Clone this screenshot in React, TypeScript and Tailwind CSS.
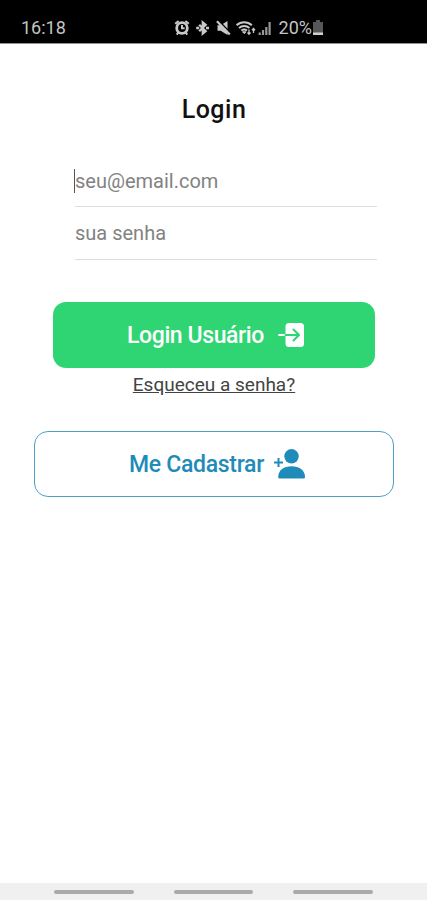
import React, { useState } from 'react'

const StatusIcons = () => (
  <svg width="101" height="18" viewBox="0 0 101 18" fill="none" stroke="#c9c9c9" className="shrink-0">
    {/* alarm */}
    <circle cx="8" cy="9" r="5.3" strokeWidth="2.8" />
    <path d="M8 6v3.3h2.6M1.2 4.8 4.6 2M11.4 2l3.4 2.8M4.4 13.2l-1.6 2.4M11.6 13.2l1.6 2.4" strokeWidth="2" />
    {/* bluetooth */}
    <path d="m25.2 5.8 6.4 6.4-2.8 2.3v-11l2.8 2.3-6.4 6.4" strokeWidth="2.3" />
    <path d="M22.2 9h3M32 9h3" strokeWidth="2.6" />
    {/* sound off */}
    <path d="M43.5 6.2h3.2L53.5 2v14l-6.8-4.200h-3.200z" fill="#c9c9c9" stroke="none" />
    <path d="m44.5 1.5 12.5 13" stroke="#000" strokeWidth="1.8" />
    <path d="m43 2.2 12.8 13.4" strokeWidth="2.2" />
    {/* wifi */}
    <path d="M62.6 6.2c4.4-4 10.8-4 15.2 0M65 9c3-2.7 7.4-2.7 10.4 0M67.4 11.6c1.7-1.4 3.9-1.4 5.6 0" strokeWidth="2" />
    <path d="m68.6 12.8 1.7 1.9 1.6-1.9z" fill="#c9c9c9" strokeWidth="1" />
    <path d="M75 10.5V15M73.500 13.500l1.500 1.700 1.500-1.700M79.500 14V9.500M78 11.200l1.500-1.700 1.500 1.700" strokeWidth="1.3" />
    {/* signal */}
    <path d="M85.7 13.5V16M89 11v5M92.3 8v8M95.6 3v13" strokeWidth="2.2" opacity=".75" />
  </svg>
)

const EnterIcon = () => (
  <svg width="27" height="24" viewBox="0 0 27 24" fill="none" className="shrink-0">
    <rect x="7.5" width="18.5" height="24" rx="3.5" fill="#fff" />
    <path d="M1 12h6.5" stroke="#fff" strokeWidth="1.8" strokeLinecap="round" />
    <path
      d="M7.500 12h13M15.500 6.500 21 12l-5.500 5.500"
      stroke="#2fd573"
      strokeWidth="2"
      strokeLinecap="round"
      strokeLinejoin="round"
    />
  </svg>
)

const PersonAddIcon = () => (
  <svg width="32" height="30" viewBox="0 0 32 30" fill="currentColor" className="shrink-0">
    <circle cx="17.5" cy="7.3" r="7.2" />
    <path d="M4.200 28C4.200 21 10 17.200 17.500 17.200S31 21 31 28c0 1-.400 1.400-1.200 1.400H5.400c-.800 0-1.200-.400-1.200-1.400z" />
    <path d="M4.5 9v9M0 13.500h9" stroke="currentColor" strokeWidth="2" />
  </svg>
)

const StatusBar = () => (
  <header className="flex h-11 items-center border-b border-[#929292] bg-black pt-[13px] pr-[103px] pb-0 pl-[21px] text-[#c4c4c4]">
    <span className="text-[18px] leading-none">16:18</span>
    <div className="ml-auto flex items-center">
      <StatusIcons />
      <span className="ml-[4px] text-[18px] leading-none">20%</span>
      <svg width="12" height="16" viewBox="0 0 12 16">
        <path d="M4 0h4v2h3v13H1V2h3z" fill="#565656" />
        <path d="M1 12.5h10V15H1z" fill="#d0d0d0" />
      </svg>
    </div>
  </header>
)

const inputClass =
  'block w-full border-b border-[#dedede] bg-transparent text-[20px] text-neutral-800 caret-transparent outline-none placeholder-[#828282]'

const App = () => {
  const [email, setEmail] = useState('')
  const [password, setPassword] = useState('')

  const handleSubmit = (e: React.FormEvent) => {
    e.preventDefault()
  }

  return (
    <div className="flex h-[900px] w-[427px] flex-col bg-white font-['Roboto',sans-serif]">
      <StatusBar />

      <main className="flex flex-1 flex-col items-center">
        <h1 className="mt-[51px] ml-px text-[25px] leading-[30px] font-medium tracking-[0.5px] text-[#111]">Login</h1>

        <form onSubmit={handleSubmit} className="flex w-full flex-col items-center">
          <div className="mt-[30px] ml-[25px] w-[302px]">
            <div className="relative">
              <input
                type="email"
                value={email}
                onChange={(e) => setEmail(e.target.value)}
                placeholder="seu@email.com"
                className={`${inputClass} h-[52px]`}
              />
              {!email && <span className="absolute top-[14px] left-[-1px] h-6 w-px bg-[#555]" />}
            </div>
            <input
              type="password"
              value={password}
              onChange={(e) => setPassword(e.target.value)}
              placeholder="sua senha"
              className={`${inputClass} h-[53px]`}
            />
          </div>

          <button
            type="submit"
            className="mt-[42px] flex h-[66px] w-[322px] items-center justify-center gap-[14px] rounded-[13px] bg-[#2fd573] pl-[5px] text-[23px] font-medium tracking-[-0.4px] text-white"
          >
            <span className="pt-0.5">Login Usuário</span>
            <EnterIcon />
          </button>
        </form>

        <a href="#" className="mt-[5px] ml-px text-[19px] leading-6 text-[#444] underline">
          Esqueceu a senha?
        </a>

        <button
          type="button"
          className="mt-[34px] ml-px flex h-[66px] w-[360px] items-center justify-center gap-[10px] rounded-[14px] border border-[#4d9fc4] pl-[7px] text-[23px] font-medium tracking-[-0.3px] text-[#1f8bb8]"
        >
          <span className="pt-0.5">Me Cadastrar</span>
          <PersonAddIcon />
        </button>
      </main>

      <nav className="flex h-[17px] items-center justify-center gap-10 bg-[#f0f0f0]">
        <span className="h-1 w-[79.5px] rounded-sm bg-[#aaa]" />
        <span className="h-1 w-[79.5px] rounded-sm bg-[#aaa]" />
        <span className="h-1 w-[79.5px] rounded-sm bg-[#aaa]" />
      </nav>
    </div>
  )
}

export default App
